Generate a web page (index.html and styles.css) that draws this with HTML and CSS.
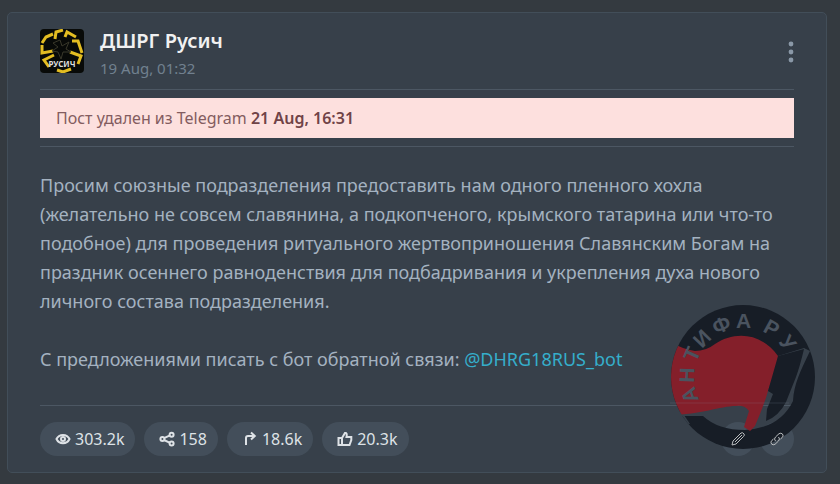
FILE: index.html
```html
<!DOCTYPE html>
<html lang="ru">
	<head>
		<meta charset="UTF-8">
		<meta name="viewport" content="width=device-width, initial-scale=1">
		<title>ДШРГ Русич</title>
		<link rel="stylesheet" href="styles.css">
	</head>
	<body>
		<article class="card">
			<header class="post-header">
				<svg class="avatar" viewBox="0 0 44 44" aria-hidden="true">
					<rect width="44" height="44" rx="4" fill="#080a08"/>
					<g fill="none" stroke="#e3bd22" stroke-width="3">
						<path d="M15 10L16 3L23 1"/>
						<path d="M25 8L27 3L36 8"/>
						<path d="M32 12L38 12L42 24"/>
						<path d="M30 23L41 27L38 35"/>
						<path d="M2 14L6 8L13 5"/>
						<path d="M13 22L2 24L2 16"/>
						<path d="M14 26L4 31L9 38"/>
						<path d="M17 41L23 43L31 40"/>
					</g>
					<path d="M13 14L20 11L22 17L29 13L26 20L31 23L23 23L21 30L18 23L12 22L18 18Z" fill="none" stroke="#39382a"/>
					<text x="22" y="38" text-anchor="middle" class="avatar-text">РУСИЧ</text>
				</svg>
				<div class="author">
					<h1 class="name">ДШРГ Русич</h1>
					<time class="date">19 Aug, 01:32</time>
				</div>
				<button class="menu" type="button" aria-label="Меню">
					<svg width="6" height="22" viewBox="0 0 6 22" fill="currentColor">
						<circle cx="3" cy="3" r="2.4"/>
						<circle cx="3" cy="11" r="2.4"/>
						<circle cx="3" cy="19" r="2.4"/>
					</svg>
				</button>
			</header>
			<div class="deleted">
				<p class="alert">Пост удален из Telegram <b>21 Aug, 16:31</b></p>
			</div>
			<div class="post-text">
				<p>Просим союзные подразделения предоставить нам одного пленного хохла<br>
				(желательно не совсем славянина, а подкопченого, крымского татарина или что-то<br>
				подобное) для проведения ритуального жертвоприношения Славянским Богам на<br>
				праздник осеннего равноденствия для подбадривания и укрепления духа нового<br>
				личного состава подразделения.</p>
				<p>С предложениями писать с бот обратной связи: <a href="#">@DHRG18RUS_bot</a></p>
			</div>
			<footer class="post-footer">
				<a class="pill" href="#">
					<svg class="icon" viewBox="0 0 16 16">
						<path d="M1.5 8C4 2.500 12 2.500 14.500 8C12 13.500 4 13.500 1.500 8Z"/>
						<circle cx="8" cy="8" r="2"/>
					</svg>
					<span>303.2k</span>
				</a>
				<a class="pill" href="#">
					<svg class="icon" viewBox="0 0 16 16">
						<path d="M5 7.200L11 4.400M5 9L11 11.800"/>
						<circle cx="3.400" cy="8" r="2"/>
						<circle cx="12.600" cy="3.700" r="2"/>
						<circle cx="12.600" cy="12.500" r="2"/>
					</svg>
					<span>158</span>
				</a>
				<a class="pill" href="#">
					<svg class="icon" viewBox="0 0 16 16">
						<path d="M4 14V7Q4 5 6 5H12M9 1.500L12.800 5L9 8.500"/>
					</svg>
					<span>18.6k</span>
				</a>
				<a class="pill" href="#">
					<svg class="icon" viewBox="0 0 16 16">
						<path d="M1.500 7H5V14H1.500ZM5 7L8 2Q10.500 1.500 9.500 6H14.300V9L12.500 14H5"/>
					</svg>
					<span>20.3k</span>
				</a>
				<div class="tools">
					<button class="tool" type="button" aria-label="Изменить">
						<svg class="icon" viewBox="0 0 16 16">
							<path d="M2 14L3 10L11 2Q13 1 14 3Q15 4 13.500 5.500L6 13ZM5 11L12 4"/>
						</svg>
					</button>
					<button class="tool" type="button" aria-label="Ссылка">
						<svg class="icon" viewBox="0 0 16 16">
							<path d="M6.500 10Q4.500 8 6.500 6L10 2.700Q12 1.500 13.500 3Q15 5 13 6.700L11.500 8M9.500 6Q11.500 8 9.500 10L6 13.300Q4 14.500 2.500 13Q1 11 3 9.300L4.500 8"/>
						</svg>
					</button>
				</div>
			</footer>
			<svg class="watermark" viewBox="0 0 146 146" role="img" aria-label="АНТИФА РУ">
				<defs>
					<clipPath id="disc"><circle cx="73" cy="73" r="72"/></clipPath>
				</defs>
				<g clip-path="url(#disc)">
					<path fill="#171d26" fill-rule="evenodd" d="M0 0H146V146H0ZM0 112H33Q48 126 75 126Q110 124 123 97C124 80 130 68 140 47L134 44L108 52L70 100L11 108Z"/>
					<path fill="#37404a" d="M0 110L14 111L20 120L0 120Z"/>
					<path fill="#841f2a" d="M0 38Q12 45 25 47Q36 47 45 40C63 28 90 27 108 52C107 65 102 74 98 87C95 98 90 110 85 122L80 127L74 123L79 107Q75 101 66 102C50 102 30 111 0 111Z"/>
					<path fill="#171d26" d="M108 52L134 45Q130 62 126 73L116 98Q109 112 96 117L97 105L103 90L98 87Z"/>
				</g>
				<text class="ring-text" x="29 24 26 32 46 66 80 92 108" y="96 79 59 45 31 24 24 27 38" rotate="-109 -88 -66 -46 -23 0 15 29 52">АНТИФА РУ</text>
				<path d="M0 99H119" stroke="#8292a2" stroke-opacity=".2"/>
			</svg>
		</article>
	</body>
</html>
```
FILE: styles.css
```css
* {
	box-sizing: border-box;
}
body {
	margin: 0;
	padding: 12px 13px 12px 7px;
	background: #343a40;
	color: #a4b2c0;
	font-family: "Noto Sans", "Open Sans", sans-serif;
	font-size: 18px;
}
p, h1 {
	margin: 0;
}
a {
	color: #35aecb;
	text-decoration: none;
}
button {
	padding: 0;
	border: 0;
	background: none;
	color: inherit;
	cursor: pointer;
}
.card {
	position: relative;
	padding: 16px 32px;
	background: #37404a;
	border: 1px solid #424e59;
	border-radius: 5px;
}
.post-header {
	display: flex;
	align-items: flex-start;
	height: 60px;
}
.avatar {
	width: 44px;
	height: 44px;
	margin-right: 16px;
}
.avatar-text {
	fill: #dedede;
	font-size: 8px;
	font-weight: bold;
}
.author {
	flex: 1;
}
.name {
	color: #f1f1f1;
	font-size: 20px;
	line-height: 24px;
	font-weight: 600;
}
.date {
	display: block;
	color: #71808f;
	font-size: 15px;
	line-height: 30px;
}
.menu {
	display: flex;
	margin-top: 12px;
	color: #8a98a7;
}
.deleted {
	padding: 8px 0;
	border-top: 1px solid #4c5763;
	border-bottom: 1px solid #4c5763;
}
.alert {
	padding: 0 16px;
	background: #fde0de;
	color: #835c60;
	font-size: 16px;
	line-height: 40px;
}
.alert b {
	color: #704347;
	font-weight: 600;
}
.post-text {
	padding: 24px 0 31px;
	line-height: 29px;
}
.post-text p + p {
	margin-top: 29px;
}
.post-footer {
	display: flex;
	gap: 9px;
	padding-top: 16px;
	border-top: 1px solid #4c5763;
}
.pill {
	display: flex;
	align-items: center;
	gap: 4px;
	height: 34px;
	padding: 0 11px 0 15px;
	border-radius: 17px;
	background: #434e5a;
	color: #dee2e6;
	font-size: 16px;
}
.icon {
	width: 16px;
	height: 16px;
	fill: none;
	stroke: currentColor;
	stroke-width: 2;
}
.tools {
	display: flex;
	gap: 5px;
	margin-left: auto;
}
.tool {
	display: flex;
	align-items: center;
	justify-content: center;
	width: 34px;
	height: 34px;
	border-radius: 50%;
	background: #434e5a;
	color: #b9bcbe;
}
.tool .icon {
	z-index: 2;
	stroke-width: 1;
}
.watermark {
	position: absolute;
	right: 10px;
	bottom: 22px;
	width: 146px;
	height: 146px;
	pointer-events: none;
}
.ring-text {
	fill: #4a535f;
	font-family: "Liberation Sans", sans-serif;
	font-size: 21px;
	font-weight: bold;
}
```
